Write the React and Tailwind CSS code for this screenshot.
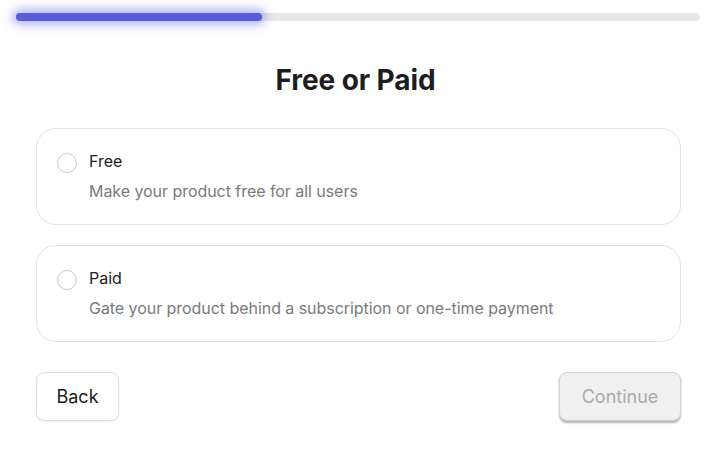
export default function App() {
  const options = [
    { title: "Free", desc: "Make your product free for all users" },
    { title: "Paid", desc: "Gate your product behind a subscription or one-time payment" },
  ];
  return (
    <div className="w-[711px] h-[456px] bg-white" style={{ fontFamily: "Inter, 'Noto Sans', sans-serif" }}>
      <div className="pt-[13px] pl-[16px] pr-[11px]">
        <div className="h-[8px] w-full rounded-full bg-[#e8e8e8]">
          <div className="h-[8px] w-[246px] rounded-full bg-[#5a5bd6] shadow-[0_0_10px_4px_rgba(90,91,230,0.45)]" />
        </div>
      </div>
      <h1 className="mt-[41px] text-center text-[28px] leading-[36px] font-bold text-[#1d1d1d] tracking-[-0.1px]">
        Free or Paid
      </h1>
      <div className="ml-[36px] w-[645px] mt-[30px] flex flex-col gap-[20px]">
        {options.map((o) => (
          <div key={o.title} className="rounded-[20px] border border-[#e2e2e2] px-[20px] pt-[20px] pb-[21px] flex gap-[12px]">
            <div className="mt-[4px] w-[20px] h-[20px] rounded-full border border-[#c8c8c8] shrink-0" />
            <div className="flex flex-col gap-[6px]">
              <div className="text-[16px] leading-[24px] text-[#202020]">{o.title}</div>
              <div className="text-[16px] leading-[24px] text-[#7a7a7a] tracking-[-0.05px]">{o.desc}</div>
            </div>
          </div>
        ))}
      </div>
      <div className="ml-[36px] w-[645px] mt-[30px] flex justify-between">
        <button className="w-[83px] h-[49px] rounded-[8px] border border-[#dedede] bg-white text-[18px] text-[#202020] shadow-[0_1px_2px_rgba(0,0,0,0.06)]">
          Back
        </button>
        <button className="w-[122px] h-[49px] rounded-[8px] border border-[#d0d0d0] bg-[#f0f0f0] text-[18px] text-[#aaaaaa] shadow-[0_2px_2px_rgba(0,0,0,0.3)]">
          Continue
        </button>
      </div>
    </div>
  );
}
